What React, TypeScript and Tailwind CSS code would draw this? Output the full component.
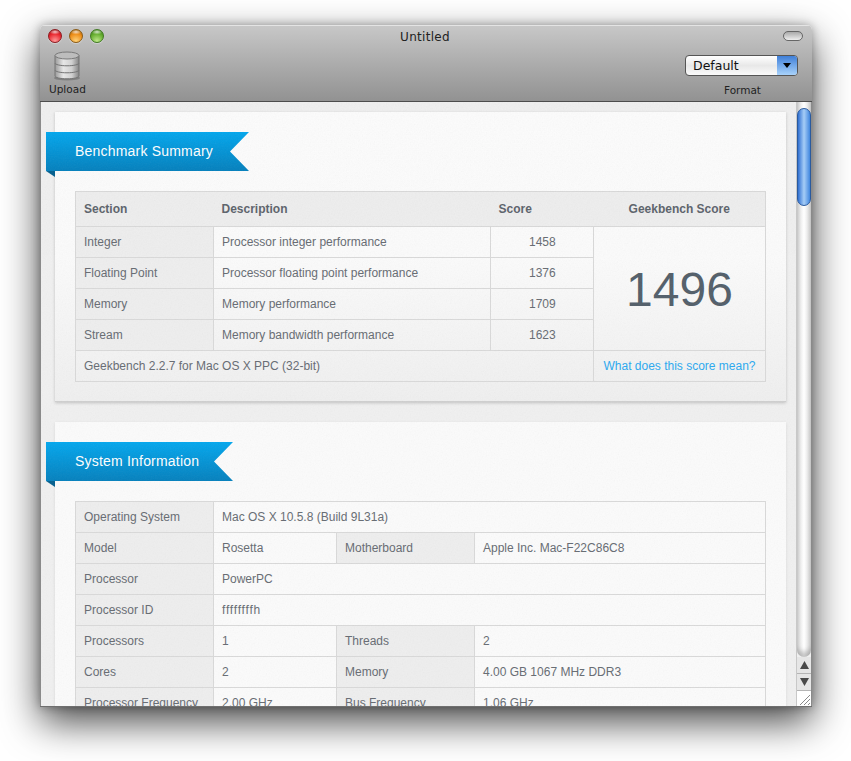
const labelCell = "border border-[#d9d9d9] bg-[#eeeeee] pl-2 pr-2 text-[#666b72] font-normal text-left"
const valueCell = "border border-[#d9d9d9] pl-2 pr-2 text-[#666b72] text-left"
const headCell = "border-y border-[#d9d9d9] bg-[#eeeeee] font-bold text-[#5c636b]"

const Light = ({ from, to, edge }: { from: string; to: string; edge: string }) => (
	<div
		className="h-[14px] w-[14px] rounded-full border shadow-[0_1px_1px_rgba(255,255,255,0.35)]"
		style={{
			borderColor: edge,
			background: `radial-gradient(ellipse 45% 22% at 50% 16%, rgba(255,255,255,0.75) 0%, rgba(255,255,255,0) 100%), radial-gradient(circle at 50% 90%, ${to} 0%, ${from} 60%, ${edge} 100%)`,
		}}
	/>
)

const DatabaseIcon = () => (
	<svg width="26" height="30" viewBox="0 0 26 30">
		<defs>
			<linearGradient id="can" x1="0" x2="1" y1="0" y2="0">
				<stop offset="0" stopColor="#9a9a9a" />
				<stop offset="0.35" stopColor="#e6e6e6" />
				<stop offset="0.7" stopColor="#d0d0d0" />
				<stop offset="1" stopColor="#858585" />
			</linearGradient>
		</defs>
		<ellipse cx="13" cy="27" rx="13" ry="2.500" fill="#000" opacity="0.2" />
		<path d="M1 19v6c0 1.500 5 2.800 12 2.800S25 26.500 25 25v-6z" fill="url(#can)" stroke="#757575" />
		<path d="M1 12v7c0 1.500 5 2.800 12 2.800S25 20.500 25 19v-7z" fill="url(#can)" stroke="#757575" />
		<path d="M1 4.500V12c0 1.500 5 2.800 12 2.800S25 13.500 25 12V4.500z" fill="url(#can)" stroke="#757575" />
		<ellipse cx="13" cy="4.500" rx="12" ry="3.500" fill="#bdbdbd" stroke="#7a7a7a" />
	</svg>
)

// paper grain that lies over the whole content pane
const Grain = () => (
	<svg className="pointer-events-none absolute inset-0 h-full w-full opacity-[0.07]">
		<filter id="grain">
			<feTurbulence type="fractalNoise" baseFrequency="0.75" numOctaves="2" />
			<feColorMatrix type="saturate" values="0" />
		</filter>
		<rect width="100%" height="100%" filter="url(#grain)" />
	</svg>
)

const Ribbon = ({ title, width }: { title: string; width: number }) => (
	<div className="relative -ml-[9px] h-[45px]">
		<div
			className="flex h-[39px] items-center bg-gradient-to-b from-[#02a7ee] to-[#0480bd] pl-[29px] text-[14px] tracking-[0.2px] text-white [clip-path:polygon(0_0,100%_0,calc(100%-19px)_50%,100%_100%,0_100%)]"
			style={{ width }}
		>
			{title}
		</div>
		<div className="h-0 w-0 border-l-[9px] border-t-[6px] border-l-transparent border-t-[#035f8e]" />
	</div>
)

const benchRows = [
	["Integer", "Processor integer performance", "1458"],
	["Floating Point", "Processor floating point performance", "1376"],
	["Memory", "Memory performance", "1709"],
	["Stream", "Memory bandwidth performance", "1623"],
]

const BenchmarkTable = () => (
	<table className="ml-5 mt-[14px] w-[690px] table-fixed border-collapse text-[12px]">
		<colgroup>
			<col className="w-[138px]" />
			<col className="w-[277px]" />
			<col className="w-[103px]" />
			<col className="w-[172px]" />
		</colgroup>
		<tbody>
			<tr className="h-[35px]">
				<th className={`${headCell} border-l pl-2 text-left`}>Section</th>
				<th className={`${headCell} pl-2 text-left`}>Description</th>
				<th className={`${headCell} pl-2 text-left`}>Score</th>
				<th className={`${headCell} border-r text-center`}>Geekbench Score</th>
			</tr>
			{benchRows.map((row, i) => (
				<tr key={row[0]} className="h-[31px]">
					<td className={labelCell}>{row[0]}</td>
					<td className={valueCell}>{row[1]}</td>
					<td className="border border-[#d9d9d9] pl-[38px] text-[#666b72]">{row[2]}</td>
					{i === 0 && (
						<td rowSpan={4} className="border border-[#d9d9d9] pt-[2px] text-center text-[48px] text-[#525e69]">
							1496
						</td>
					)}
				</tr>
			))}
			<tr className="h-[31px]">
				<td colSpan={3} className={valueCell}>
					Geekbench 2.2.7 for Mac OS X PPC (32-bit)
				</td>
				<td className="border border-[#d9d9d9] text-center text-[#2aa9f0]">What does this score mean?</td>
			</tr>
		</tbody>
	</table>
)

const systemRows = [
	["Operating System", "Mac OS X 10.5.8 (Build 9L31a)"],
	["Model", "Rosetta", "Motherboard", "Apple Inc. Mac-F22C86C8"],
	["Processor", "PowerPC"],
	["Processor ID", "ffffffffh"],
	["Processors", "1", "Threads", "2"],
	["Cores", "2", "Memory", "4.00 GB 1067 MHz DDR3"],
	["Processor Frequency", "2.00 GHz", "Bus Frequency", "1.06 GHz"],
]

const SystemTable = () => (
	<table className="ml-5 mt-[14px] w-[690px] table-fixed border-collapse text-[12px]">
		<colgroup>
			<col className="w-[138px]" />
			<col className="w-[123px]" />
			<col className="w-[138px]" />
			<col className="w-[291px]" />
		</colgroup>
		<tbody>
			{systemRows.map((row) => (
				<tr key={row[0]} className="h-[31px]">
					<td className={labelCell}>{row[0]}</td>
					{row.length === 2 ? (
						<td colSpan={3} className={`${valueCell} ${row[1] === "ffffffffh" ? "tracking-[0.8px]" : ""}`}>
							{row[1]}
						</td>
					) : (
						<>
							<td className={valueCell}>{row[1]}</td>
							<td className={labelCell}>{row[2]}</td>
							<td className={valueCell}>{row[3]}</td>
						</>
					)}
				</tr>
			))}
		</tbody>
	</table>
)

const Scrollbar = () => (
	<div className="flex w-[16px] shrink-0 flex-col border-x border-l-[#c8c8c8] border-r-[#8a8a8a] bg-[#f0f0f0]">
		<div className="flex-1 rounded-b-[7px] bg-gradient-to-r from-[#dcdcdc] via-[#ffffff] to-[#d8d8d8] pt-[6px] shadow-[inset_0_-5px_5px_rgba(0,0,0,0.22)]">
			<div className="h-[98px] w-[14px] rounded-full border border-[#2a5a9e] bg-gradient-to-r from-[#2f6fd0] via-[#a6cdf6] to-[#3f86de]" />
		</div>
		<div className="flex h-[17px] items-center justify-center border-b border-[#b5b5b5] bg-[#e6e6e6]">
			<svg width="9" height="8" viewBox="0 0 9 8">
				<path d="M4.500 0L9 8H0z" fill="#4a4a4a" />
			</svg>
		</div>
		<div className="flex h-[17px] items-center justify-center border-b border-[#b5b5b5] bg-[#e6e6e6]">
			<svg width="9" height="8" viewBox="0 0 9 8">
				<path d="M0 0h9L4.500 8z" fill="#4a4a4a" />
			</svg>
		</div>
		<div className="h-[15px] bg-white">
			<svg width="14" height="15" viewBox="0 0 14 15">
				<path d="M3 14L13 4M7 14l6-6M11 14l2-2" stroke="#8a8a8a" strokeWidth="1" fill="none" />
			</svg>
		</div>
	</div>
)

const App = () => {
	return (
		<div className="h-[761px] w-[851px] overflow-hidden bg-white pl-10 pt-[25px] font-['Liberation_Sans',Arial,sans-serif]">
			<div className="flex h-[682px] w-[772px] flex-col overflow-hidden rounded-t-[5px] border-b border-[#6f6f6f] shadow-[0_15px_38px_rgba(0,0,0,0.72),0_0_10px_rgba(0,0,0,0.3)]">
				<div className="relative h-[77px] shrink-0 border-b border-[#4d4d4d] bg-gradient-to-b from-[#c8c8c8] to-[#929292] font-['DejaVu_Sans',sans-serif] shadow-[inset_0_1px_0_#e4e4e4]">
					<div className="absolute left-2 top-[4px] flex gap-[7px]">
						<Light from="#e8242c" to="#ff9a9a" edge="#8c1a1f" />
						<Light from="#ec8a14" to="#ffd37a" edge="#8a5a14" />
						<Light from="#62ab2c" to="#bfe98a" edge="#3f7a20" />
					</div>
					<div className="-ml-[2px] pt-[5px] text-center text-[12px] leading-[14px] tracking-[0.3px] text-[#222]">Untitled</div>
					<div className="absolute right-[9px] top-[6px] h-[10px] w-[20px] rounded-full border border-[#666] bg-gradient-to-b from-[#aaa] to-[#eee]" />
					<div className="absolute left-[9px] top-[26px] flex flex-col items-center">
						<div className="h-[30px]">
							<DatabaseIcon />
						</div>
						<div className="mt-[2px] text-[10.500px] leading-[12px] text-[#222]">Upload</div>
					</div>
					<div className="absolute right-[14px] top-[30px] flex h-[21px] w-[113px] items-center overflow-hidden rounded-[4px] border border-[#555] bg-gradient-to-b from-[#ffffff] via-[#e8e8e8] to-[#fafafa] pl-[7px] text-[12.500px] text-[#111]">
						<span className="flex-1 pt-px">Default</span>
						<div className="flex h-full w-[20px] items-center justify-center bg-gradient-to-b from-[#3f7fd8] to-[#a8d2fa]">
							<div className="h-0 w-0 border-x-[4px] border-t-[5px] border-x-transparent border-t-black" />
						</div>
					</div>
					<div className="absolute right-[51px] top-[59px] text-[10.500px] leading-[12px] text-[#222]">Format</div>
				</div>
				<div className="flex min-h-0 flex-1 overflow-hidden">
					<div className="relative min-w-0 flex-1 overflow-hidden border-l border-[#8a8a8a] bg-[#f0f0f0] pl-[14px] pt-[10px]">
						<div className="h-[290px] w-[731px] border-b border-[#cfcfcf] bg-gradient-to-b from-[#fcfcfc] via-[#fbfbfb] to-[#efefef] pt-5 shadow-[0_1px_3px_rgba(0,0,0,0.2)]">
							<Ribbon title="Benchmark Summary" width={203} />
							<BenchmarkTable />
						</div>
						<div className="mt-5 w-[731px] bg-[#fbfbfb] pb-5 pt-5 shadow-[0_1px_3px_rgba(0,0,0,0.1)]">
							<Ribbon title="System Information" width={187} />
							<SystemTable />
						</div>
						<Grain />
					</div>
					<Scrollbar />
				</div>
			</div>
		</div>
	)
}

export default App
